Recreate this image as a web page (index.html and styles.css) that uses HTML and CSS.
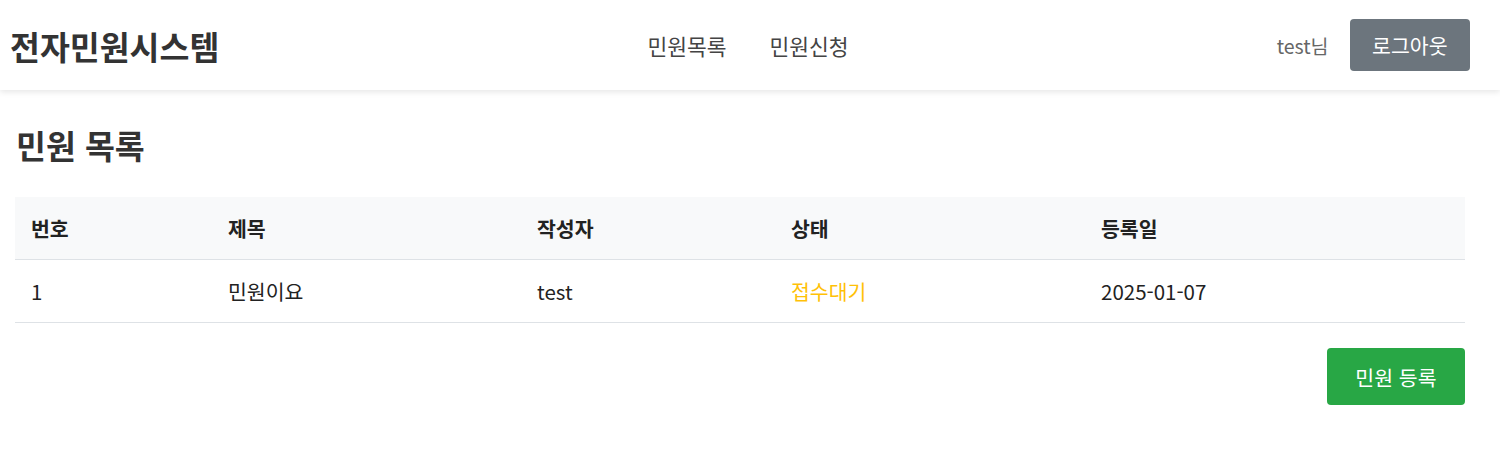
FILE: index.html
```html
<!DOCTYPE html>
<html lang="ko">
<head>
<meta charset="utf-8">
<title>전자민원시스템</title>
<link rel="stylesheet" href="styles.css">
</head>
<body>
<header class="topbar">
  <div class="brand">전자민원시스템</div>
  <nav class="menu">
    <a href="#">민원목록</a>
    <a href="#">민원신청</a>
  </nav>
  <div class="user">
    <span class="username">test님</span>
    <button class="btn btn-gray">로그아웃</button>
  </div>
</header>
<main class="content">
  <h2 class="page-title">민원 목록</h2>
  <table class="list">
    <thead>
      <tr>
        <th class="c1">번호</th>
        <th class="c2">제목</th>
        <th class="c3">작성자</th>
        <th class="c4">상태</th>
        <th class="c5">등록일</th>
      </tr>
    </thead>
    <tbody>
      <tr>
        <td>1</td>
        <td>민원이요</td>
        <td>test</td>
        <td class="status-wait">접수대기</td>
        <td>2025-01-07</td>
      </tr>
    </tbody>
  </table>
  <div class="actions">
    <button class="btn btn-green">민원 등록</button>
  </div>
</main>
</body>
</html>
```
FILE: styles.css
```css
* { box-sizing: border-box; }
body {
  margin: 0;
  font-family: "Noto Sans CJK KR", "Noto Sans", sans-serif;
  color: #222;
  background: #fff;
}
.topbar {
  height: 90px;
  display: flex;
  align-items: center;
  justify-content: space-between;
  padding: 0 30px 0 10px;
  background: #fff;
  box-shadow: 0 2px 6px rgba(0,0,0,0.10);
  position: relative;
}
.brand {
  font-size: 32.5px;
  font-weight: 700;
  color: #333;
  width: 400px;
}
.menu {
  display: flex;
  gap: 43px;
  margin-left: 16px;
}
.menu a {
  font-size: 21.5px;
  color: #444;
  text-decoration: none;
}
.user {
  width: 400px;
  display: flex;
  justify-content: flex-end;
  align-items: center;
  gap: 21px;
}
.username {
  font-size: 19.5px;
  color: #666;
}
.btn {
  font-family: inherit;
  border: none;
  border-radius: 4px;
  color: #fff;
  cursor: pointer;
}
.btn-gray {
  background: #6c757d;
  font-size: 20.5px;
  height: 52px;
  padding: 0 22.5px;
}
.btn-green {
  background: #28a745;
  font-size: 20.5px;
  height: 57px;
  padding: 0 28.5px;
}
.content {
  width: 1450px;
  margin-left: 15px;
  padding-top: 32px;
}
.page-title {
  margin: 0 0 29px 1px;
  font-size: 32.5px;
  font-weight: 700;
  color: #333;
  line-height: 1.4;
}
.list {
  width: 100%;
  border-collapse: collapse;
  font-size: 20.5px;
}
.list th, .list td {
  text-align: left;
  padding: 0 16px;
  height: 63px;
  border-bottom: 1px solid #dee2e6;
  color: #222;
}
.list th {
  background: #f8f9fa;
  font-weight: 700;
}
.c1 { width: 197px; }
.c2 { width: 309px; }
.c3 { width: 254px; }
.c4 { width: 310px; }
.list td.status-wait { color: #ffc107; }
.actions {
  display: flex;
  justify-content: flex-end;
  margin-top: 25px;
}
```
